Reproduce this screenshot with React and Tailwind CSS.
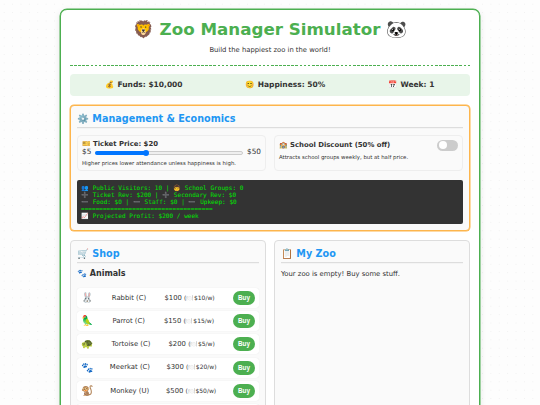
const animals = [
  { icon: "🐰", name: "Rabbit (C)", price: 100, upkeep: 10 },
  { icon: "🦜", name: "Parrot (C)", price: 150, upkeep: 15 },
  { icon: "🐢", name: "Tortoise (C)", price: 200, upkeep: 5 },
  { icon: "🐾", name: "Meerkat (C)", price: 300, upkeep: 20 },
  { icon: "🐒", name: "Monkey (U)", price: 500, upkeep: 50 },
];

function PanelTitle({ children }) {
  return (
    <h2 className="border-b border-[#ddd] pb-[1px] text-[9.65px] leading-[14px] font-bold whitespace-pre text-[#2196f3] shadow-[0_0.5px_0_#eee]">
      {children}
    </h2>
  );
}

function AnimalRow({ animal }) {
  return (
    <div className="flex h-[20px] items-center justify-between rounded-[3px] bg-white pr-[4px] pl-[4px] shadow-[0_0_1px_rgba(0,0,0,0.12)]">
      <span className="text-[10px] leading-none">{animal.icon}</span>
      <span className="text-[6.85px]">{animal.name}</span>
      <span className="text-[6.85px] whitespace-nowrap">
        ${animal.price}{" "}
        <small className="text-[6px]">
          (🍽️${animal.upkeep}/w)
        </small>
      </span>
      <button className="h-[14px] w-[22px] rounded-full bg-[#4caf50] font-['Liberation_Sans',sans-serif] text-[6.3px] leading-[12px] font-bold text-white">
        Buy
      </button>
    </div>
  );
}

export default function App() {
  return (
    <div className="h-[405px] overflow-hidden bg-[#fdfdfd] bg-[radial-gradient(#f0f0f0_0.5px,transparent_0.9px)] bg-[size:8.4px_8.4px] pt-[9px] font-['DejaVu_Sans','Noto_Color_Emoji',sans-serif] text-[6.85px] text-[#333]">
      <div className="mx-auto h-[480px] w-[420px] rounded-[7px] border border-[#4caf50] bg-white px-[9px] shadow-[0_0_0_0.5px_#4caf50,0_2px_7px_rgba(0,0,0,0.1)]">
        <header className="pt-[7px] text-center">
          <h1 className="text-[16.7px] leading-[25px] font-bold whitespace-nowrap text-[#4caf50]">
            <span className="font-['Noto_Color_Emoji']">🦁</span> Zoo Manager Simulator{" "}
            <span className="font-['Noto_Color_Emoji']">🐼</span>
          </h1>
          <p className="mt-[4px] text-[6.8px] leading-[9px]">Build the happiest zoo in the world!</p>
          <div className="mt-[10px] h-px bg-[repeating-linear-gradient(90deg,#4caf50_0_2.7px,#fff_2.7px_4.1px)]" />
        </header>

        <div className="mt-[8px] flex h-[22px] items-center justify-around rounded-[4px] bg-[#e8f5e9] px-[4px] text-[7.5px] font-bold">
          <span>💰 Funds: $10,000</span>
          <span>
            <span className="font-['Noto_Color_Emoji']">😊</span> Happiness: 50%
          </span>
          <span>📅 Week: 1</span>
        </div>

        <section className="mt-[9px] h-[126px] rounded-[4px] border border-[#fdb54c] bg-[#fafafa] px-[6px] pt-[5.5px] shadow-[0_0_0_0.5px_#fdb54c]">
          <PanelTitle>⚙️ Management & Economics</PanelTitle>
          <div className="mt-[7px] grid grid-cols-2 gap-[8px]">
            <div className="h-[36px] rounded-[4px] border border-[#eee] px-[4px] pt-[4px]">
              <p className="text-[6.9px] leading-[9px] font-bold">🎫 Ticket Price: $20</p>
              <div className="flex h-[8px] items-center justify-between text-[7.3px]">
                <span>$5</span>
                <div className="relative h-[4px] w-[148px] rounded-full border border-[#ccc] bg-[#efefef]">
                  <div className="absolute -top-px -left-px h-[4px] w-[51px] rounded-full bg-[#0075ff]" />
                  <div className="absolute -top-[2px] left-[47px] size-[6px] rounded-full bg-[#0075ff]" />
                </div>
                <span>$50</span>
              </div>
              <p className="mt-[2px] text-[5.4px] leading-[8px]">
                Higher prices lower attendance unless happiness is high.
              </p>
            </div>
            <div className="h-[36px] rounded-[4px] border border-[#eee] px-[4px] pt-[4px]">
              <div className="flex h-[11px] items-center justify-between">
                <p className="text-[6.9px] font-bold">🏫 School Discount (50% off)</p>
                <div className="flex h-[11px] w-[21px] items-center rounded-full bg-[#ccc] pl-[1.5px]">
                  <div className="size-[8px] rounded-full bg-white" />
                </div>
              </div>
              <p className="mt-[2.5px] text-[5.4px] leading-[8px]">
                Attracts school groups weekly, but at half price.
              </p>
            </div>
          </div>
          <div className="mt-[9.5px] h-[44px] rounded-[2px] bg-[#333] px-[4px] pt-[4px] font-['DejaVu_Sans_Mono',monospace] text-[6.08px] leading-[7.1px] whitespace-pre text-[#00e400]">
            <p>👥 Public Visitors: 10 | 🧒 School Groups: 0</p>
            <p>➕ Ticket Rev: $200 | ➕ Secondary Rev: $0</p>
            <p>➖ Food: $0 | ➖ Staff: $0 | ➖ Upkeep: $0</p>
            <p>====================================</p>
            <p>📈 Projected Profit: $200 / week</p>
          </div>
        </section>

        <div className="mt-[8.5px] grid h-[240px] grid-cols-2 gap-[8px]">
          <section className="rounded-[4px] border border-[#ddd] bg-[#fafafa] px-[6px] pt-[6px]">
            <PanelTitle>🛒 Shop</PanelTitle>
            <h3 className="mt-[5.5px] text-[8px] leading-[12px] font-bold">🐾 Animals</h3>
            <div className="mt-[8px] flex flex-col gap-[3.2px]">
              {animals.map((animal) => (
                <AnimalRow key={animal.name} animal={animal} />
              ))}
              <div className="h-[20px] rounded-[3px] bg-white shadow-[0_0_1px_rgba(0,0,0,0.12)]" />
            </div>
          </section>
          <section className="rounded-[4px] border border-[#ddd] bg-[#fafafa] px-[6px] pt-[6px]">
            <PanelTitle>📋 My Zoo</PanelTitle>
            <p className="mt-[6px] leading-[10px]">Your zoo is empty! Buy some stuff.</p>
          </section>
        </div>
      </div>
    </div>
  );
}
